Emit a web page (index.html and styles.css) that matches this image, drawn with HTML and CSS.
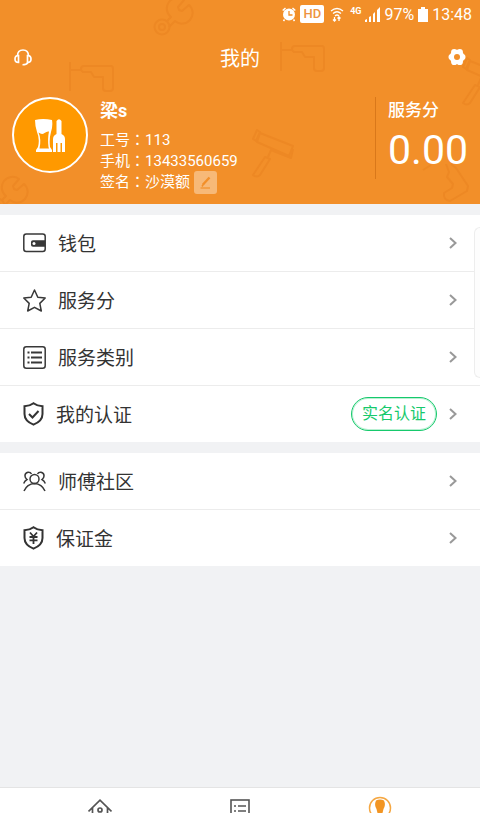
FILE: index.html
```html
<!DOCTYPE html>
<html lang="zh-CN">
<head>
<meta charset="utf-8">
<meta name="viewport" content="width=device-width, initial-scale=1">
<title>我的</title>
<link rel="stylesheet" href="styles.css">
</head>
<body>
<div class="app">
  <header class="hero">
    <svg class="doodles" viewBox="0 0 480 204" preserveAspectRatio="xMidYMin slice" aria-hidden="true">
      <defs>
        <g id="wrench">
          <path d="M5 20 L9 16 A10.500 10.500 0 0 1 22 -1 L16 6 L17 9 L20 10 L27 4 A10.500 10.500 0 0 1 13 20 L7 26"/>
          <circle cx="0" cy="26" r="7.500"/><circle cx="0" cy="26" r="3"/>
        </g>
        <g id="drill">
          <path d="M0 0 V29 M0 8 H11 M14 4 H41 Q43 4 43 7 V26 Q43 29 40 29 H36 Q33 29 33 26 V15 H24 L21 10 H13 Q11 9 11 7 Q11 4 14 4"/>
        </g>
        <g id="roller">
          <path d="M3 2 L36 15 L32 25 L0 11 Z M-4 8 L0 -1 L3 1 L-1 10 Z M36 18 L34 27 L14 19 L11 26"/>
          <path d="M8 26 L13 28 L3 44 Q0 47 -4 44 Z"/>
        </g>
      </defs>
      <use href="#wrench" x="162" y="1"/>
      <use href="#wrench" x="-3" y="180"/>
      <use href="#drill" x="70" y="62"/>
      <use href="#drill" x="281" y="42"/>
      <use href="#roller" x="257" y="131"/>
      <use href="#roller" x="467" y="59"/>
      <path d="M423 170 L431 165 M446 164 L449 172 L447 177 L453 184 L452 188 L444 193 Q443 200 450 201 L467 191 L468 186 L456 168 L451 164"/>
    </svg>

    <div class="status">
      <svg width="14" height="15" viewBox="0 0 14 15" aria-hidden="true"><circle cx="7" cy="7.500" r="6" fill="#fff"/><path d="M0.700 3.500 3.500 1M13.300 3.500 10.500 1M2.500 12.500 1.500 14M11.500 12.500l1 1.500" stroke="#fff" stroke-width="1.500"/><path d="M7 4v4h3.500" fill="none" stroke="#f28f29" stroke-width="1.300"/></svg>
      <span class="hd">HD</span>
      <svg class="wifi" width="14" height="15" viewBox="0 0 14 15" fill="none" stroke="#fff" stroke-width="1.300" aria-hidden="true"><path d="M1 4Q7-1 13 4M3 6.500Q7 3 11 6.500M5 9Q7 7 9 9"/><path d="M4.500 14V10M3 12.500 4.500 14 6 12.500M9 10v4M7.500 11.500 9 10l1.500 1.500"/></svg>
      <span class="net">4G</span>
      <svg width="15" height="15" viewBox="0 0 15 15" fill="#fff" aria-hidden="true"><path d="M0 15v-2l2-1v3zM4 15v-5l2-1v6zM8 15V7l2-2v10zM12 15V3l3-3v15z"/></svg>
      <span>97%</span>
      <svg width="10" height="15" viewBox="0 0 10 15" fill="#fff" aria-hidden="true"><path d="M3 0h4v2h3v13H0V2h3z"/></svg>
      <time>13:48</time>
    </div>

    <div class="nav">
      <button class="icon-btn" type="button" aria-label="客服">
        <svg width="18" height="17" viewBox="0 0 18 17" fill="none" stroke="#fff" stroke-width="1.700"><path d="M3.500 7Q3.500 1 9 1t5.500 6"/><path d="M4.500 6.500v7Q1 13.500 1 10T4.500 6.500zM13.500 6.500v7Q17 13.500 17 10T13.500 6.500z"/><path d="M14 13.500Q12.500 15.800 8.500 15.800" stroke-width="1.500"/></svg>
      </button>
      <h1>我的</h1>
      <button class="icon-btn" type="button" aria-label="设置">
        <svg width="18" height="18" viewBox="0 0 18 18" fill="#fff"><circle cx="9" cy="9" r="7.300"/><circle cx="3.600" cy="9" r="3.100"/><circle cx="14.400" cy="9" r="3.100"/><circle cx="6.200" cy="4.100" r="3.100"/><circle cx="11.800" cy="4.100" r="3.100"/><circle cx="6.200" cy="13.900" r="3.100"/><circle cx="11.800" cy="13.900" r="3.100"/><circle cx="9" cy="9" r="3" fill="#f28f29"/></svg>
      </button>
    </div>

    <div class="profile">
      <div class="avatar">
        <svg width="30" height="33" viewBox="0 0 30 33" fill="#fff" aria-hidden="true"><path d="M0 1Q8-1 17 1 18 7 16 13 14 20 15 28L17 31V33H1V31L3 28Q5 20 2 13 0 7 0 1z"/><path d="M3.500 13.500Q7 16 9.500 14T14 12.500Q12.500 19 13.500 28L14 29.500H4.500Q6.500 20 3.500 13.500z" fill="#f90"/><path d="M21.500 2q2.500-3.500 5 0V15q3.500 1.500 3.500 5v13h-3V24h-1.500v9h-3V24H21v9h-3V20q0-3.500 3.500-5z"/></svg>
      </div>
      <div class="info">
        <h2>梁s</h2>
        <p>工号<span class="colon" lang="zh-TW">：</span>113</p>
        <p>手机<span class="colon" lang="zh-TW">：</span>13433560659</p>
        <div class="sign">
          <p>签名<span class="colon" lang="zh-TW">：</span>沙漠额</p>
          <button class="edit" type="button" aria-label="编辑签名"><svg width="13" height="13" viewBox="0 0 13 13" fill="none" stroke="#f28f29"><path d="M10.500 1.500 4 8.500" stroke-width="2.400"/><path d="M3 10.500 4.500 8" stroke-width="1.500"/><path d="M1.500 12H11" stroke-width="1.200"/></svg></button>
        </div>
      </div>
      <div class="score">
        <h2>服务分</h2>
        <strong>0.00</strong>
      </div>
    </div>
  </header>

  <main>
    <nav class="group">
      <a class="row" href="#wallet">
        <svg width="23" height="20" viewBox="0 0 23 20" fill="none" stroke="#383838" stroke-width="1.500"><rect x="0.800" y="1" width="21.400" height="17.500" rx="2.500"/><path d="M22 7.300H10Q8 7.300 8 9v3q0 1.700 2 1.700h12z" fill="#383838" stroke="none"/><circle cx="11" cy="10.500" r="1.500" fill="#fff" stroke="none"/></svg>
        <span class="label">钱包</span>
        <svg class="chev" viewBox="0 0 8 12"><path d="M1 1l5.500 5L1 11"/></svg>
      </a>
      <a class="row" href="#score">
        <svg width="23" height="23" viewBox="0 0 23 23" fill="none" stroke="#383838" stroke-width="1.500" stroke-linejoin="round"><path d="M11.500 1 14.800 8.200 22.200 9 16.800 14.400 18.300 22 11.500 18.300 4.700 22 6.200 14.400 0.800 9 8.200 8.200z"/></svg>
        <span class="label">服务分</span>
        <svg class="chev" viewBox="0 0 8 12"><path d="M1 1l5.500 5L1 11"/></svg>
      </a>
      <a class="row" href="#category">
        <svg width="23" height="23" viewBox="0 0 23 23" fill="none" stroke="#383838" stroke-width="1.500"><rect x="0.800" y="0.800" width="21.400" height="21.400" rx="2.500"/><path d="M8 6.500h11M8 11.500h11M8 16.500h11M4.500 6.500h2M4.500 11.500h2M4.500 16.500h2" stroke-width="1.800"/></svg>
        <span class="label">服务类别</span>
        <svg class="chev" viewBox="0 0 8 12"><path d="M1 1l5.500 5L1 11"/></svg>
      </a>
      <a class="row" href="#verify">
        <svg width="21" height="24" viewBox="0 0 21 24" fill="none" stroke="#333" stroke-width="2"><path d="M10.500 1.300Q14 4 19.500 4.300V12Q19.500 19 10.500 22.700 1.500 19 1.500 12V4.300Q7 4 10.500 1.300z"/><path d="M6 12l3.500 3.500L15.500 9"/></svg>
        <span class="label">我的认证</span>
        <span class="badge">实名认证</span>
        <svg class="chev" viewBox="0 0 8 12"><path d="M1 1l5.500 5L1 11"/></svg>
      </a>
    </nav>
    <nav class="group">
      <a class="row" href="#community">
        <svg width="23" height="21" viewBox="0 0 23 21" fill="none" stroke="#383838" stroke-width="1.500"><circle cx="11.500" cy="8" r="4.500"/><path d="M1 20Q4 13 11.500 12.500 19 13 22 20M8.500 3Q7.500 1 5 1.200 1.800 1.800 2 5 2 7 4 8.500 1.500 10 0.700 12.500M14.500 3q1-2 3.500-1.800 3.200.6 3 3.800 0 2-2 3.500 2.500 1.500 3.300 4"/></svg>
        <span class="label">师傅社区</span>
        <svg class="chev" viewBox="0 0 8 12"><path d="M1 1l5.500 5L1 11"/></svg>
      </a>
      <a class="row" href="#deposit">
        <svg width="21" height="24" viewBox="0 0 21 24" fill="none" stroke="#333" stroke-width="2"><path d="M10.500 1.300Q14 4 19.500 4.300V12Q19.500 19 10.500 22.700 1.500 19 1.500 12V4.300Q7 4 10.500 1.300z"/><path d="M7 6.500l3.500 4L14 6.500M10.500 10.500V18M6.500 11h8M6.500 14.300h8" stroke-width="1.800"/></svg>
        <span class="label">保证金</span>
        <svg class="chev" viewBox="0 0 8 12"><path d="M1 1l5.500 5L1 11"/></svg>
      </a>
    </nav>
    <div class="edge-panel" aria-hidden="true"></div>
  </main>

  <nav class="tabs">
    <a href="#home" aria-label="首页"><svg width="24" height="24" viewBox="0 0 24 24" fill="none" stroke="#555" stroke-width="1.700"><path d="M0.500 12.500 12 1.200 23.500 12.500M4.500 9v14h15V9"/><circle cx="12" cy="11" r="2"/></svg></a>
    <a href="#orders" aria-label="订单"><svg width="20" height="24" viewBox="0 0 20 24" fill="none" stroke="#555" stroke-width="1.600"><rect x="1" y="1" width="18" height="22"/><path d="M8 7h8M8 12h8M4 7h2M4 12h2M8 17h8M4 17h2"/></svg></a>
    <a class="me" href="#me" aria-label="我的"><svg width="24" height="24" viewBox="0 0 24 24"><circle cx="12" cy="12" r="10.500" fill="none" stroke="#f5a742" stroke-width="1.500"/><path d="M8 4.500Q12 2.500 16 4.500 18 9 15.500 13l-1 4h-5l-1-4Q6 9 8 4.500z" fill="#f29523"/></svg></a>
  </nav>
</div>
</body>
</html>
```
FILE: styles.css
```css
* {
  box-sizing: border-box;
}

body {
  margin: 0;
  background: #f1f2f4;
  color: #333;
  font-family: Roboto, "Noto Sans CJK SC", sans-serif;
}

h1,
h2,
p {
  margin: 0;
}

button {
  padding: 0;
  border: 0;
  background: none;
}

svg {
  display: block;
  flex: none;
}

.app {
  display: flex;
  flex-direction: column;
  height: 100vh;
  overflow: hidden;
}

.hero {
  position: relative;
  padding-bottom: 11px;
  background: #f28f29;
  color: #fff;
}

.doodles {
  position: absolute;
  inset: 0;
  width: 100%;
  height: 100%;
  fill: none;
  stroke: #ed8824;
  stroke-width: 2;
  stroke-linejoin: round;
}

.status,
.nav,
.profile {
  position: relative;
  display: flex;
}

.status {
  align-items: center;
  justify-content: flex-end;
  gap: 4px;
  height: 28px;
  padding: 0 8px;
  font-size: 16px;
}

.hd {
  padding: 0 3px;
  border-radius: 2px;
  background: #fff;
  color: #ee9440;
  font: 500 13px/18px Roboto, sans-serif;
}

.wifi {
  margin: 0 2px;
}

.net {
  align-self: flex-start;
  padding-top: 6px;
  font-size: 9px;
  font-weight: 700;
  line-height: 10px;
}

.nav {
  align-items: center;
  justify-content: space-between;
  height: 58px;
  padding: 0 14px;
}

.nav h1 {
  font-size: 20px;
  font-weight: 400;
}

.profile {
  padding: 11px 12px 0;
}

.avatar {
  display: grid;
  place-items: center;
  width: 76px;
  height: 76px;
  border: 2px solid #fff;
  border-radius: 50%;
  background: #f90;
}

.info {
  flex: 1;
  padding-left: 12px;
  font-size: 15px;
  line-height: 21px;
}

.info h2 {
  margin-bottom: 6px;
  font-size: 18px;
  font-weight: 700;
  line-height: 27px;
}

.colon {
  font-family: "Noto Sans CJK TC", sans-serif;
  line-height: 1px;
}

.sign {
  display: flex;
  align-items: center;
  gap: 4px;
  height: 21px;
}

.edit {
  display: grid;
  place-items: center;
  width: 23px;
  height: 23px;
  border-radius: 3px;
  background: #f7b978;
}

.score {
  height: 82px;
  padding-left: 12px;
  border-left: 1px solid #d9781a;
}

.score h2 {
  font-size: 17px;
  font-weight: 500;
  line-height: 26px;
}

.score strong {
  display: block;
  font-size: 41px;
  font-weight: 400;
  line-height: 54px;
}

main {
  position: relative;
  flex: 1;
}

.group {
  margin-top: 11px;
  background: #fff;
}

.row {
  display: flex;
  align-items: center;
  gap: 12px;
  height: 57px;
  padding: 0 23px;
  border-bottom: 1px solid #ececec;
  color: #333;
  text-decoration: none;
}

.row:last-child {
  height: 56px;
  border-bottom: 0;
}

.label {
  flex: 1;
  padding-bottom: 2px;
  font-size: 19px;
}

.badge {
  padding: 0 10px;
  border: 1px solid #16c96c;
  border-radius: 17px;
  box-shadow: inset 0 0 0 1px #b9f0d3;
  color: #16c96c;
  font-size: 16px;
  line-height: 32px;
}

.chev {
  width: 8px;
  height: 12px;
  fill: none;
  stroke: #999;
  stroke-width: 2;
}

.edge-panel {
  position: absolute;
  top: 23px;
  right: 0;
  width: 6px;
  height: 151px;
  border: 1px solid #ededed;
  border-right: 0;
  border-radius: 6px 0 0 6px;
  background: #fdfdfd;
}

.tabs {
  display: grid;
  grid-template-columns: repeat(3, 1fr);
  height: 26px;
  padding: 0 30px;
  overflow: hidden;
  border-top: 1px solid #e4e4e4;
  background: #fff;
}

.tabs a {
  display: flex;
  justify-content: center;
  padding-top: 11px;
}

.tabs .me {
  padding-top: 8px;
}
```
